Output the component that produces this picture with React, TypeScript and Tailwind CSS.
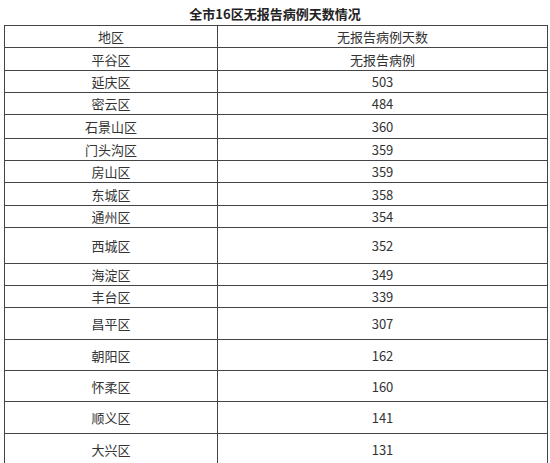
const rows: { name: string; days: string; h: string }[] = [
  { name: '平谷区', days: '无报告病例', h: 'h-[23px]' },
  { name: '延庆区', days: '503', h: 'h-[22px]' },
  { name: '密云区', days: '484', h: 'h-[22px]' },
  { name: '石景山区', days: '360', h: 'h-[24px]' },
  { name: '门头沟区', days: '359', h: 'h-[22px]' },
  { name: '房山区', days: '359', h: 'h-[22px]' },
  { name: '东城区', days: '358', h: 'h-[23px]' },
  { name: '通州区', days: '354', h: 'h-[22px]' },
  { name: '西城区', days: '352', h: 'h-[36px]' },
  { name: '海淀区', days: '349', h: 'h-[22px]' },
  { name: '丰台区', days: '339', h: 'h-[22px]' },
  { name: '昌平区', days: '307', h: 'h-[32px]' },
  { name: '朝阳区', days: '162', h: 'h-[31px]' },
  { name: '怀柔区', days: '160', h: 'h-[31px]' },
  { name: '顺义区', days: '141', h: 'h-[32px]' },
  { name: '大兴区', days: '131', h: 'h-[32px]' },
]

export default function App() {
  return (
    <div className="w-[550px] h-[463px] overflow-hidden bg-white font-['Noto_Sans_CJK_SC','Noto_Sans',sans-serif] text-[13px] text-[#333]">
      {/* Title */}
      <div className="h-[25px] flex items-center justify-center font-bold text-[13px] text-[#222] pt-[2px]">
        全市16区无报告病例天数情况
      </div>

      {/* Table */}
      <div className="px-[4px]">
        <table className="w-[543px] border-collapse table-fixed">
          <colgroup>
            <col className="w-[213px]" />
            <col className="w-[330px]" />
          </colgroup>
          <tbody>
            <tr className="h-[22px]">
              <td className="border border-[#444] text-center leading-none p-0">地区</td>
              <td className="border border-[#444] text-center leading-none p-0">无报告病例天数</td>
            </tr>
            {rows.map((r) => (
              <tr key={r.name} className={r.h}>
                <td className="border border-[#444] text-center leading-none p-0">{r.name}</td>
                <td className="border border-[#444] text-center leading-none p-0">{r.days}</td>
              </tr>
            ))}
          </tbody>
        </table>
      </div>
    </div>
  )
}
